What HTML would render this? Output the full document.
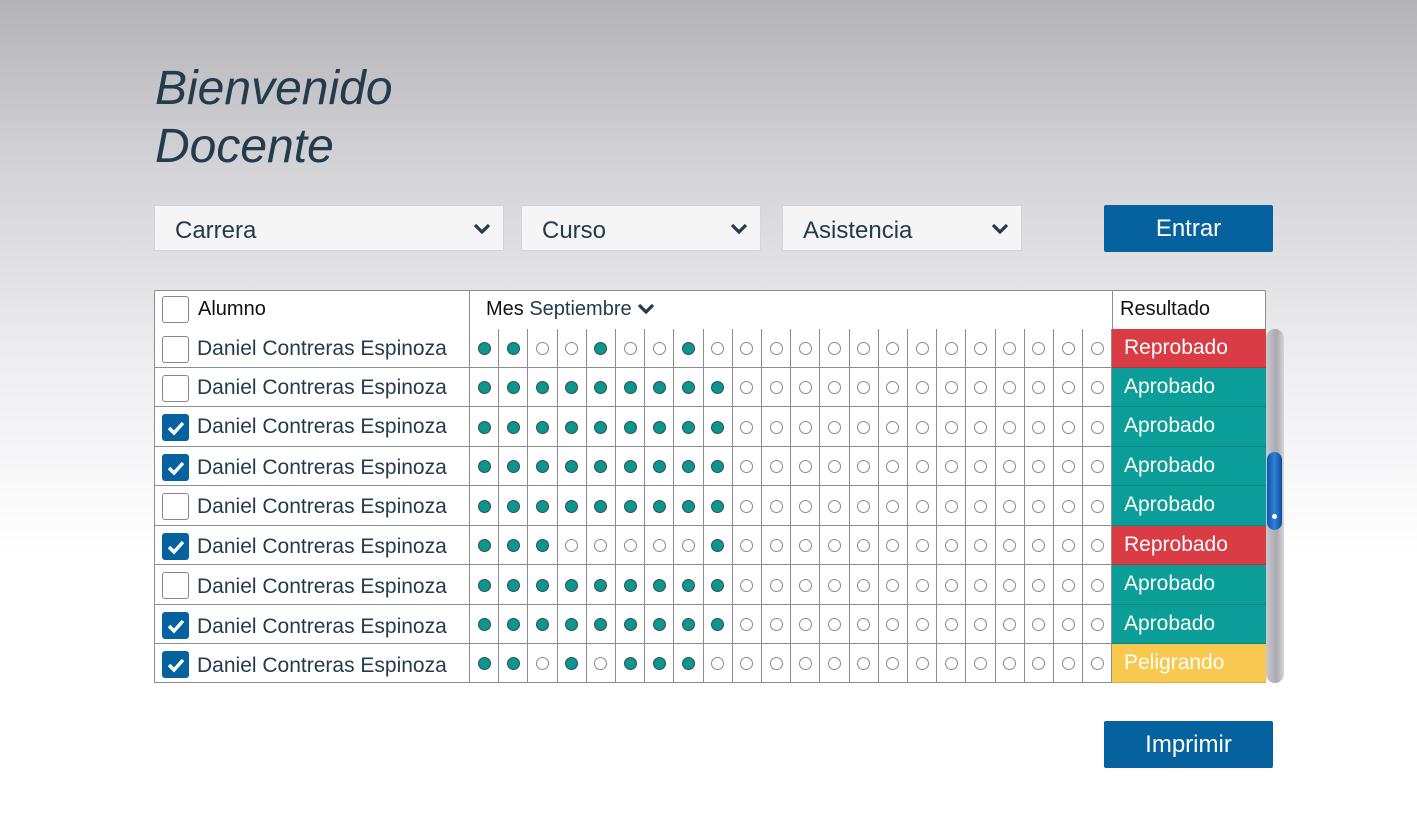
<!DOCTYPE html>
<html><head><meta charset="utf-8"><style>
*{margin:0;padding:0;box-sizing:border-box}
body{width:1417px;height:838px;overflow:hidden;position:relative;font-family:"Liberation Sans",sans-serif;background:linear-gradient(#b4b3b8 0px,#d6d6da 180px,#f0f0f3 380px,#fff 560px,#fff 838px)}
.a{position:absolute}
h1{position:absolute;left:155px;top:60px;font-weight:normal;font-style:italic;font-size:48px;line-height:58px;color:#243a4d}
.sel{position:absolute;top:205px;height:46px;background:#f6f5f6;border:1px solid #d4d4d8;border-radius:2px;font-size:24px;color:#243a4d;padding:11px 0 0 20px}
.sel svg{position:absolute;right:12px;top:17px}
.btn{position:absolute;left:1104px;width:169px;height:47px;background:#05629e;color:#fff;font-size:24px;text-align:center;line-height:47px;border-radius:2px}
.row{position:absolute;left:154px;width:958px;background:#fff;border:1px solid #8d8d8d;border-top:none}
.nm{position:absolute;left:42px;font-size:21px;color:#243a4d}
.cb{position:absolute;left:8px;width:27px;height:27px;border:1px solid #888;border-radius:3px;background:#fff}
.ck{background:#05629e;border-color:#05629e}
.res{position:absolute;left:1112px;width:154px;color:#fff;font-size:21px;padding-left:12px}
.c{position:absolute;top:0;bottom:0;border-left:1px solid #8d8d8d}
.d{position:absolute;width:13px;height:13px;border-radius:50%;border:1.5px solid #8a8a8a;background:#fff}
.f{background:#0b968e;border:1.5px solid #3a4a55}
</style></head><body>
<h1>Bienvenido<br>Docente</h1>
<div class="sel" style="left:154px;width:350px">Carrera<svg width="18" height="12" viewBox="0 0 18 12"><path d="M2 2l7 7 7-7" stroke="#243a4d" stroke-width="3.2" fill="none"/></svg></div>
<div class="sel" style="left:521px;width:240px">Curso<svg width="18" height="12" viewBox="0 0 18 12"><path d="M2 2l7 7 7-7" stroke="#243a4d" stroke-width="3.2" fill="none"/></svg></div>
<div class="sel" style="left:782px;width:240px">Asistencia<svg width="18" height="12" viewBox="0 0 18 12"><path d="M2 2l7 7 7-7" stroke="#243a4d" stroke-width="3.2" fill="none"/></svg></div>
<div class="btn" style="top:205px">Entrar</div>
<div class="btn" style="top:721px">Imprimir</div>

<div class="a" style="left:154px;top:290px;width:1112px;height:40px;background:#fff;border:1px solid #8d8d8d;border-radius:2px"></div>
<div class="a" style="left:469px;top:290px;height:40px;border-left:1px solid #8d8d8d"></div>
<div class="a" style="left:1112px;top:290px;height:40px;border-left:1px solid #8d8d8d"></div>
<div class="cb" style="left:162px;top:296px"></div>
<div class="a" style="left:198px;top:298px;font-size:20px;color:#111">Alumno</div>
<div class="a" style="left:486px;top:298px;font-size:20px;color:#111">Mes <span style="color:#243a4d">Septiembre</span> <svg width="18" height="12" viewBox="0 0 18 12"><path d="M2 2l7 7 7-7" stroke="#243a4d" stroke-width="3.2" fill="none"/></svg></div>
<div class="a" style="left:1120px;top:298px;font-size:20px;color:#111">Resultado</div>
<div id="rows"></div>
<div class="a" style="left:1266px;top:329px;width:18px;height:354px;border-radius:9px;background:linear-gradient(90deg,#c8c8cd,#a9a9af 60%,#d5d5da)"></div>
<div class="a" style="left:1267px;top:452px;width:15px;height:78px;border-radius:8px;background:linear-gradient(90deg,#0a58b0,#2f7fd6 50%,#0a4e9f)"><div class="a" style="left:5px;top:62px;width:5px;height:5px;border-radius:50%;background:#fff"></div></div>
<script>
var tops=[329,368,407,447,486,526,565,605,644,683];
var pats=["110010010","111111111","111111111","111111111","111111111","111000001","111111111","111111111","110101110"];
var res=["#d93c44","#0b9e99","#0b9e99","#0b9e99","#0b9e99","#d93c44","#0b9e99","#0b9e99","#f8c94e"];
var h='';
for(var i=0;i<9;i++){var t=tops[i],hh=tops[i+1]-t;
h+='<div class="row" style="top:'+t+'px;height:'+hh+'px">';
h+='<div class="c" style="left:314px"></div>';
for(var j=0;j<22;j++){var x=315+j*29.2;if(j>0)h+='<div class="c" style="left:'+(x-1)+'px"></div>';
var f=j<9&&pats[i][j]=='1';h+='<div class="d'+(f?' f':'')+'" style="left:'+(x+7.5)+'px;top:'+(hh/2-6.5)+'px"></div>';}
h+='</div>';
h+='<div class="res" style="top:'+t+'px;height:'+hh+'px;background:'+res[i]+';border-bottom:1px solid rgba(0,0,0,.12)"></div>';}
document.getElementById('rows').insertAdjacentHTML('afterbegin',h);
</script>
<div class="cb" style="top:336px;left:162px"></div><div class="nm a" style="left:197px;top:337px">Daniel Contreras Espinoza</div>
<div class="cb" style="top:375px;left:162px"></div><div class="nm a" style="left:197px;top:376px">Daniel Contreras Espinoza</div>
<div class="cb ck" style="top:414px;left:162px"><svg width="25" height="25" viewBox="0 0 25 25"><path d="M6 13l5 5 9-10" stroke="#fff" stroke-width="3.5" fill="none"/></svg></div><div class="nm a" style="left:197px;top:415px">Daniel Contreras Espinoza</div>
<div class="cb ck" style="top:454px;left:162px"><svg width="25" height="25" viewBox="0 0 25 25"><path d="M6 13l5 5 9-10" stroke="#fff" stroke-width="3.5" fill="none"/></svg></div><div class="nm a" style="left:197px;top:456px">Daniel Contreras Espinoza</div>
<div class="cb" style="top:493px;left:162px"></div><div class="nm a" style="left:197px;top:495px">Daniel Contreras Espinoza</div>
<div class="cb ck" style="top:533px;left:162px"><svg width="25" height="25" viewBox="0 0 25 25"><path d="M6 13l5 5 9-10" stroke="#fff" stroke-width="3.5" fill="none"/></svg></div><div class="nm a" style="left:197px;top:535px">Daniel Contreras Espinoza</div>
<div class="cb" style="top:572px;left:162px"></div><div class="nm a" style="left:197px;top:575px">Daniel Contreras Espinoza</div>
<div class="cb ck" style="top:612px;left:162px"><svg width="25" height="25" viewBox="0 0 25 25"><path d="M6 13l5 5 9-10" stroke="#fff" stroke-width="3.5" fill="none"/></svg></div><div class="nm a" style="left:197px;top:615px">Daniel Contreras Espinoza</div>
<div class="cb ck" style="top:651px;left:162px"><svg width="25" height="25" viewBox="0 0 25 25"><path d="M6 13l5 5 9-10" stroke="#fff" stroke-width="3.5" fill="none"/></svg></div><div class="nm a" style="left:197px;top:654px">Daniel Contreras Espinoza</div>
<div class="res" style="top:336px">Reprobado</div>
<div class="res" style="top:375px">Aprobado</div>
<div class="res" style="top:414px">Aprobado</div>
<div class="res" style="top:454px">Aprobado</div>
<div class="res" style="top:493px">Aprobado</div>
<div class="res" style="top:533px">Reprobado</div>
<div class="res" style="top:572px">Aprobado</div>
<div class="res" style="top:612px">Aprobado</div>
<div class="res" style="top:651px">Peligrando</div>
</body></html>
